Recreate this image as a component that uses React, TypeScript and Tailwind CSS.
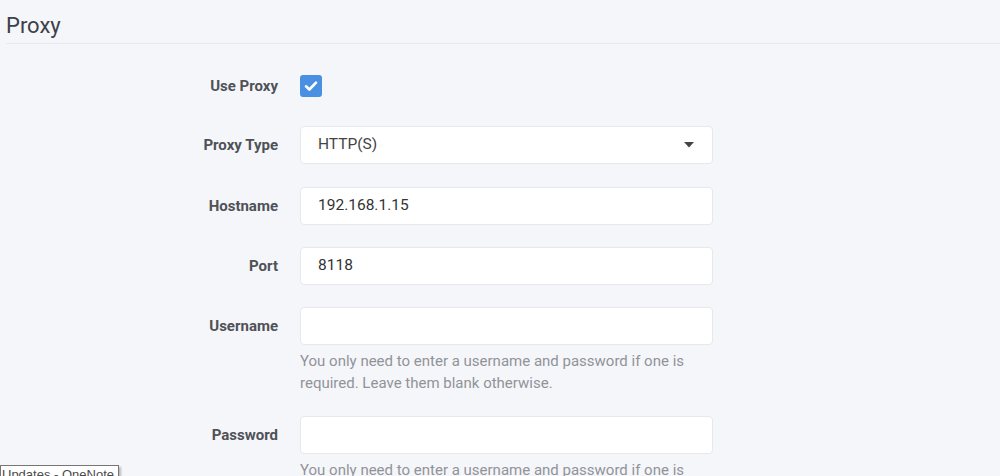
import React from 'react';

const helpText =
  'You only need to enter a username and password if one is required. Leave them blank otherwise.';

function Row({ label, children, center = true }: { label: string; children: React.ReactNode; center?: boolean }) {
  return (
    <div className={`flex ${center ? 'items-center' : 'items-start'}`}>
      <label className="w-[278px] shrink-0 text-right text-[15px] font-bold text-[#4f5157] h-[38px] flex items-center justify-end">
        {label}
      </label>
      <div className="ml-[22px] w-[413px]">{children}</div>
    </div>
  );
}

function TextInput({ value }: { value?: string }) {
  return (
    <div className="h-[38px] w-full rounded-[4px] border border-[#e6e8ee] bg-white px-[17px] flex items-center text-[15.5px] text-[#333]">
      {value}
    </div>
  );
}

export default function App() {
  return (
    <div className="relative h-[476px] w-[1000px] overflow-hidden bg-[#f5f6fa] font-['Roboto',sans-serif]">
      {/* Header */}
      <div className="pl-[6px] pt-[10px]">
        <h1 className="text-[22px] leading-[32px] text-[#3c4049] pb-[1px] border-b border-[#e7e9ee]">Proxy</h1>
      </div>

      {/* Form */}
      <div className="mt-[31px] flex flex-col">
        <div className="flex items-center h-[22px]">
          <span className="w-[278px] text-right text-[15px] font-bold text-[#4f5157]">Use Proxy</span>
          <div className="ml-[22px] h-[22px] w-[22px] rounded-[3px] bg-[#4a90e2] flex items-center justify-center">
            <svg width="16" height="16" viewBox="0 0 16 16" fill="none">
              <path d="M3 8.3 L6.4 11.5 L13 4.6" stroke="white" strokeWidth="2.6" strokeLinecap="round" strokeLinejoin="round" />
            </svg>
          </div>
        </div>

        <div className="mt-[29px]">
          <Row label="Proxy Type">
            <div className="h-[38px] w-full rounded-[4px] border border-[#e6e8ee] bg-white pl-[17px] pr-[18px] flex items-center justify-between text-[15.5px] text-[#444]">
              <span>HTTP(S)</span>
              <svg width="10" height="6" viewBox="0 0 10 6">
                <path d="M0 0 H10 L5 5.5 Z" fill="#444" />
              </svg>
            </div>
          </Row>
        </div>

        <div className="mt-[23px]">
          <Row label="Hostname">
            <TextInput value="192.168.1.15" />
          </Row>
        </div>

        <div className="mt-[22px]">
          <Row label="Port">
            <TextInput value="8118" />
          </Row>
        </div>

        <div className="mt-[22px]">
          <Row label="Username" center={false}>
            <TextInput />
            <p className="mt-[5px] text-[15px] leading-[22px] text-[#919399]">{helpText}</p>
          </Row>
        </div>

        <div className="mt-[22px]">
          <Row label="Password" center={false}>
            <TextInput />
            <p className="mt-[5px] text-[15px] leading-[22px] text-[#919399]">{helpText}</p>
          </Row>
        </div>
      </div>

      {/* OS tooltip overlay */}
      <div className="absolute left-0 top-[465px] border border-[#767676] bg-white pl-[1px] pr-[4px] text-[13px] leading-[17px] text-[#4a4a4a] font-['Liberation_Sans',sans-serif] shadow-[2px_2px_2px_rgba(0,0,0,0.25)]">
        Updates - OneNote
      </div>
    </div>
  );
}
